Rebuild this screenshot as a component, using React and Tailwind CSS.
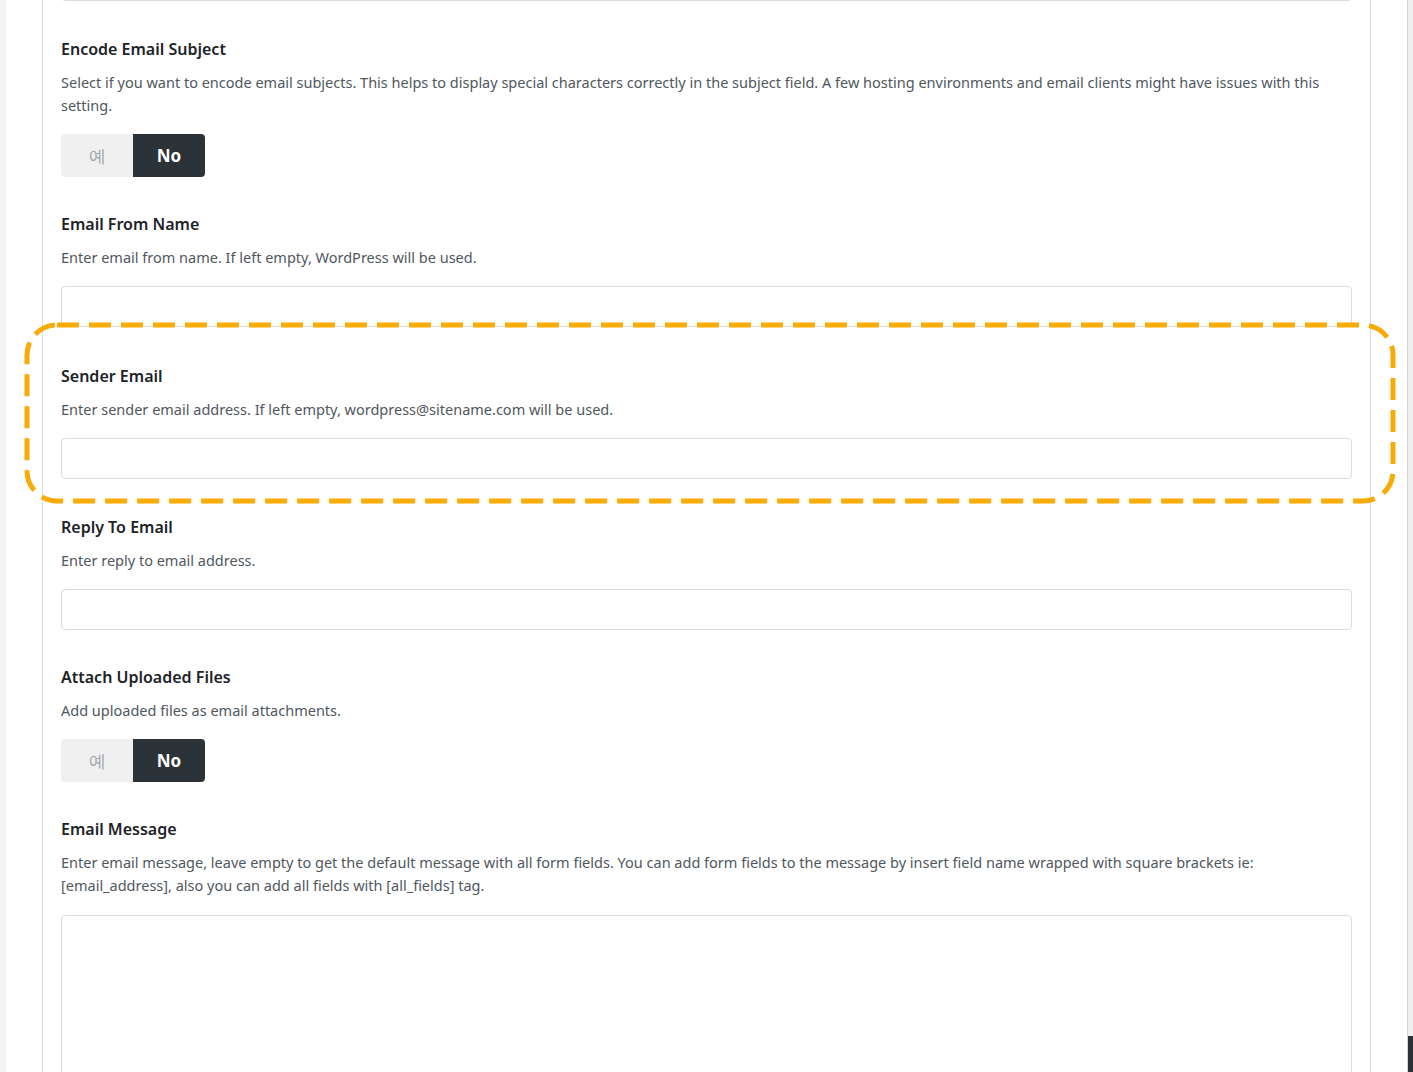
import React from "react";

const font = { fontFamily: '"Noto Sans", "Open Sans", Arial, sans-serif' };

function Heading({ children }) {
  return <div className="text-[16px] leading-[24px] font-semibold text-[#1d2327]">{children}</div>;
}
function Desc({ children }) {
  return <div className="mt-[10px] text-[14.5px] leading-[23px] text-[#50575e]">{children}</div>;
}
function Input() {
  return <div className="mt-[17px] h-[41px] rounded-[4px] border border-[#dcdcde] bg-white" />;
}
function Toggle() {
  return (
    <div className="mt-[17px] flex h-[43px] w-[144px]">
      <div className="flex w-[72px] items-center justify-center rounded-l-[4px] bg-[#f0f0f1] text-[17px] text-[#9ea3a8]">예</div>
      <div className="flex w-[72px] items-center justify-center rounded-r-[4px] bg-[#2c3338] text-[17px] font-bold text-white">No</div>
    </div>
  );
}

export default function App() {
  return (
    <div className="relative flex h-[1072px] w-[1413px] overflow-hidden bg-white" style={font}>
      <div className="w-[6px] shrink-0 bg-[#f3f3f3]" />
      <div className="flex-1 px-[36px]">
        <div className="flex h-full flex-col border-x border-[#dcdcde] px-[18px]">
          <div className="-mt-[40px] h-[41px] shrink-0 rounded-[4px] border border-[#dcdcde]" />
          <div className="mt-[36px]">
            <Heading>Encode Email Subject</Heading>
            <Desc>
              Select if you want to encode email subjects. This helps to display special characters correctly in the subject field. A few hosting environments and email clients might have issues with this setting.
            </Desc>
            <Toggle />
          </div>
          <div className="mt-[35px]">
            <Heading>Email From Name</Heading>
            <Desc>Enter email from name. If left empty, WordPress will be used.</Desc>
            <Input />
          </div>
          <div className="mt-[37px]">
            <Heading>Sender Email</Heading>
            <Desc>Enter sender email address. If left empty, wordpress@sitename.com will be used.</Desc>
            <Input />
          </div>
          <div className="mt-[36px]">
            <Heading>Reply To Email</Heading>
            <Desc>Enter reply to email address.</Desc>
            <Input />
          </div>
          <div className="mt-[35px]">
            <Heading>Attach Uploaded Files</Heading>
            <Desc>Add uploaded files as email attachments.</Desc>
            <Toggle />
          </div>
          <div className="mt-[35px]">
            <Heading>Email Message</Heading>
            <Desc>
              Enter email message, leave empty to get the default message with all form fields. You can add form fields to the message by insert field name wrapped with square brackets ie: [email_address], also you can add all fields with [all_fields] tag.
            </Desc>
            <div className="mt-[18px] h-[300px] rounded-[4px] border border-[#dcdcde] bg-white" />
          </div>
        </div>
      </div>
      <div className="relative w-[6px] shrink-0 border-l border-[#d5d5d5] bg-[#efefef]">
        <div className="absolute bottom-0 left-0 h-[36px] w-full bg-[#2c3338]" />
      </div>
      <svg className="pointer-events-none absolute left-[24px] top-[322px]" width="1372" height="182" viewBox="0 0 1372 182">
        <rect x="3" y="3" width="1366" height="176" rx="30" ry="30" fill="none" stroke="#f8ab07" strokeWidth="5" strokeDasharray="22 10" />
      </svg>
    </div>
  );
}
